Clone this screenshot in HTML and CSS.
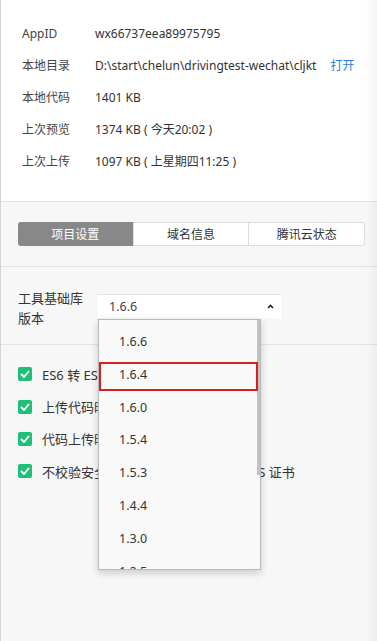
FILE: index.html
```html
<!DOCTYPE html>
<html lang="zh-CN">
  <head>
    <meta charset="UTF-8" />
    <meta name="viewport" content="width=device-width, initial-scale=1.0" />
    <title>项目详情</title>
    <link rel="stylesheet" href="styles.css">
  </head>
  <body>
    <div class="panel">
      <section class="info">
        <div class="row"><span class="key">AppID</span><span class="val">wx66737eea89975795</span></div>
        <div class="row"><span class="key">本地目录</span><span class="val">D:\start\chelun\drivingtest-wechat\cljkt</span><a class="open" href="#">打开</a></div>
        <div class="row"><span class="key">本地代码</span><span class="val">1401 KB</span></div>
        <div class="row"><span class="key">上次预览</span><span class="val">1374 KB ( 今天20:02 )</span></div>
        <div class="row"><span class="key">上次上传</span><span class="val">1097 KB ( 上星期四11:25 )</span></div>
      </section>

      <section class="tabs-wrap">
        <div class="tabs">
          <div class="tab active">项目设置</div>
          <div class="tab">域名信息</div>
          <div class="tab">腾讯云状态</div>
        </div>
      </section>

      <section class="lib">
        <div class="lib-label">工具基础库<br />版本</div>
        <div class="select-wrap">
          <div class="select">
            <span>1.6.6</span>
            <svg class="caret" width="7" height="5" viewBox="0 0 7 5">
              <path d="M1 4 L3.5 1.5 L6 4" fill="none" stroke="#222" stroke-width="1.6" />
            </svg>
          </div>
          <div class="dropdown">
            <div class="scrollbar"></div>
            <div class="item">1.6.6</div>
            <div class="item marked">1.6.4</div>
            <div class="item">1.6.0</div>
            <div class="item">1.5.4</div>
            <div class="item">1.5.3</div>
            <div class="item">1.4.4</div>
            <div class="item">1.3.0</div>
            <div class="item">1.2.5</div>
          </div>
        </div>
      </section>

      <section class="opts">
        <label class="opt"><span class="check"><svg width="10" height="8" viewBox="0 0 10 8"><path d="M1 4 L4 7 L9 1" fill="none" stroke="#fff" stroke-width="1.8" /></svg></span>ES6 转 ES5</label>
        <label class="opt"><span class="check"><svg width="10" height="8" viewBox="0 0 10 8"><path d="M1 4 L4 7 L9 1" fill="none" stroke="#fff" stroke-width="1.8" /></svg></span>上传代码时样式自动补全</label>
        <label class="opt"><span class="check"><svg width="10" height="8" viewBox="0 0 10 8"><path d="M1 4 L4 7 L9 1" fill="none" stroke="#fff" stroke-width="1.8" /></svg></span>代码上传时自动压缩</label>
        <label class="opt"><span class="check"><svg width="10" height="8" viewBox="0 0 10 8"><path d="M1 4 L4 7 L9 1" fill="none" stroke="#fff" stroke-width="1.8" /></svg></span>不校验安全域名、TLS 版本以及 HTTPS 证书</label>
      </section>
    </div>
  </body>
</html>
```

FILE: styles.css
```css
:root {
  --line: #e3e3e3;
  --text: #333;
  --green: #1fbf7a;
}

body {
  margin: 0;
  font-family: "Noto Sans", "Noto Sans CJK SC", sans-serif;
  font-size: 12px;
  color: var(--text);
  background: #f7f7f7;
}

.panel {
  width: 376px;
  height: 641px;
  border-left: 1px solid #d4d4d4;
  background: #f7f7f7;
  overflow: hidden;
  position: relative;
}

/* faint shade along the right edge */
.panel::after {
  content: "";
  position: absolute;
  top: 0;
  right: 0;
  bottom: 0;
  width: 12px;
  background: linear-gradient(90deg, rgba(0, 0, 0, 0), rgba(0, 0, 0, 0.04));
  pointer-events: none;
}

.info {
  background: #fff;
  padding: 17px 0 24px 21px;
  border-bottom: 1px solid var(--line);
}

.row {
  display: flex;
  align-items: center;
  height: 32px;
}

.key {
  width: 73px;
  color: #444;
}

.val {
  color: #333;
}

.open {
  margin-left: 14px;
  color: #2f7bd9;
  text-decoration: none;
}

.tabs-wrap {
  padding: 20px 12px 20px 17px;
  border-bottom: 1px solid var(--line);
}

.tabs {
  display: flex;
  border: 1px solid #dcdcdc;
  border-radius: 3px;
  background: #fff;
  height: 22px;
}

.tab {
  flex: 1;
  display: flex;
  align-items: center;
  justify-content: center;
  border-left: 1px solid #dcdcdc;
  color: #333;
}

.tab:first-child {
  border-left: none;
}

.tab.active {
  background: #888;
  color: #fff;
  margin: -1px 0 -1px -1px;
  border-radius: 3px 0 0 3px;
}

.lib {
  display: flex;
  align-items: flex-start;
  padding: 21px 0 16px 17px;
  border-bottom: 1px solid var(--line);
}

.lib-label {
  width: 80px;
  line-height: 20px;
  font-size: 13px;
  color: #333;
}

.select-wrap {
  position: relative;
  margin-top: 6px;
}

.select {
  width: 165px;
  height: 23px;
  padding: 0 7px 0 11px;
  display: flex;
  align-items: center;
  justify-content: space-between;
  background: #fff;
  border-top: 1px solid #e2e2e2;
  color: #444;
  font-size: 12.5px;
}

.caret {
  margin-bottom: 1px;
}

.dropdown {
  position: absolute;
  top: 25px;
  left: 0;
  width: 163px;
  height: 251px;
  padding-top: 6px;
  box-sizing: border-box;
  background: #f9f9f9;
  border: 1px solid #b9b9b9;
  box-shadow: 0 3px 8px rgba(0, 0, 0, 0.18);
  overflow: hidden;
  z-index: 2;
}

.scrollbar {
  position: absolute;
  top: 0;
  right: 0;
  width: 3px;
  height: 155px;
  background: #c2c2c2;
}

.item {
  position: relative;
  height: 32.8px;
  line-height: 32.8px;
  padding-left: 20px;
  font-size: 12.5px;
  color: #333;
}

.item.marked::after {
  content: "";
  position: absolute;
  top: 3px;
  bottom: 1px;
  left: 0;
  right: 2px;
  border: 2px solid #d81e1e;
}

.opts {
  padding: 13px 0 0 17px;
}

.opt {
  display: flex;
  align-items: center;
  height: 32.4px;
  font-size: 13px;
  color: #333;
  white-space: nowrap;
}

.check {
  width: 14px;
  height: 14px;
  margin-right: 10px;
  border-radius: 2px;
  background: var(--green);
  display: flex;
  align-items: center;
  justify-content: center;
}
```
